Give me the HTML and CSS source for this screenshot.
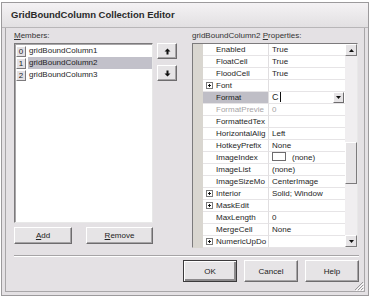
FILE: index.html
```html
<!DOCTYPE html>
<html lang="en">
<head>
    <meta charset="UTF-8">
    <meta name="viewport" content="width=device-width, initial-scale=1.0">
    <title>GridBoundColumn Collection Editor</title>
    <link rel="stylesheet" href="styles.css">
</head>
<body>
    <div class="window">
        <div class="titlebar">GridBoundColumn Collection Editor</div>

        <div class="frame">
            <div class="main">
                <div class="members">
                    <div class="caption"><u>M</u>embers:</div>
                    <div class="listbox">
                        <div class="item"><span class="idx">0</span><span class="name">gridBoundColumn1</span></div>
                        <div class="item selected"><span class="idx">1</span><span class="name">gridBoundColumn2</span></div>
                        <div class="item"><span class="idx">2</span><span class="name">gridBoundColumn3</span></div>
                    </div>
                    <div class="member-buttons">
                        <button class="btn add"><u>A</u>dd</button>
                        <button class="btn remove"><u>R</u>emove</button>
                    </div>
                </div>

                <div class="arrows">
                    <button class="btn arrow up">
                        <svg width="7" height="7" viewBox="0 0 7 7"><path d="M3.5 0.5 L6.5 3.5 H4.5 V6.5 H2.5 V3.5 H0.5 Z" fill="#111"/></svg>
                    </button>
                    <button class="btn arrow down">
                        <svg width="7" height="7" viewBox="0 0 7 7"><path d="M3.5 6.5 L6.5 3.5 H4.5 V0.5 H2.5 V3.5 H0.5 Z" fill="#111"/></svg>
                    </button>
                </div>

                <div class="props">
                    <div class="caption">gridBoundColumn2 <u>P</u>roperties:</div>
                    <div class="pgrid">
                        <div class="prows">
                            <div class="prow"><span class="gutter"></span><span class="pname">Enabled</span><span class="pval">True</span></div>
                            <div class="prow"><span class="gutter"></span><span class="pname">FloatCell</span><span class="pval">True</span></div>
                            <div class="prow"><span class="gutter"></span><span class="pname">FloodCell</span><span class="pval">True</span></div>
                            <div class="prow"><span class="gutter"></span><span class="pname expand"><svg class="plus" width="7" height="7" viewBox="0 0 7 7"><rect x="0.5" y="0.5" width="6" height="6" fill="#fff" stroke="#7a7a7a"/><path d="M2 3.5 H5 M3.5 2 V5" stroke="#111"/></svg>Font</span><span class="pval"></span></div>
                            <div class="prow active"><span class="gutter"></span><span class="pname">Format</span><span class="pval edit"><span class="caret">C</span><span class="drop"><svg width="5" height="3" viewBox="0 0 5 3"><path d="M0 0 H5 L2.5 3 Z" fill="#111"/></svg></span></span></div>
                            <div class="prow"><span class="gutter"></span><span class="pname muted">FormatPrevie</span><span class="pval muted">0</span></div>
                            <div class="prow"><span class="gutter"></span><span class="pname">FormattedTex</span><span class="pval"></span></div>
                            <div class="prow"><span class="gutter"></span><span class="pname">HorizontalAlig</span><span class="pval">Left</span></div>
                            <div class="prow"><span class="gutter"></span><span class="pname">HotkeyPrefix</span><span class="pval">None</span></div>
                            <div class="prow"><span class="gutter"></span><span class="pname">ImageIndex</span><span class="pval"><span class="swatch"></span>(none)</span></div>
                            <div class="prow"><span class="gutter"></span><span class="pname">ImageList</span><span class="pval">(none)</span></div>
                            <div class="prow"><span class="gutter"></span><span class="pname">ImageSizeMo</span><span class="pval">CenterImage</span></div>
                            <div class="prow"><span class="gutter"></span><span class="pname expand"><svg class="plus" width="7" height="7" viewBox="0 0 7 7"><rect x="0.5" y="0.5" width="6" height="6" fill="#fff" stroke="#7a7a7a"/><path d="M2 3.5 H5 M3.5 2 V5" stroke="#111"/></svg>Interior</span><span class="pval">Solid; Window</span></div>
                            <div class="prow"><span class="gutter"></span><span class="pname expand"><svg class="plus" width="7" height="7" viewBox="0 0 7 7"><rect x="0.5" y="0.5" width="6" height="6" fill="#fff" stroke="#7a7a7a"/><path d="M2 3.5 H5 M3.5 2 V5" stroke="#111"/></svg>MaskEdit</span><span class="pval"></span></div>
                            <div class="prow"><span class="gutter"></span><span class="pname">MaxLength</span><span class="pval">0</span></div>
                            <div class="prow"><span class="gutter"></span><span class="pname">MergeCell</span><span class="pval">None</span></div>
                            <div class="prow"><span class="gutter"></span><span class="pname expand"><svg class="plus" width="7" height="7" viewBox="0 0 7 7"><rect x="0.5" y="0.5" width="6" height="6" fill="#fff" stroke="#7a7a7a"/><path d="M2 3.5 H5 M3.5 2 V5" stroke="#111"/></svg>NumericUpDo</span><span class="pval"></span></div>
                        </div>
                        <div class="vscroll">
                            <div class="sbtn"><svg width="5" height="3" viewBox="0 0 5 3"><path d="M0 3 H5 L2.5 0 Z" fill="#111"/></svg></div>
                            <div class="track top"></div>
                            <div class="thumb"></div>
                            <div class="track"></div>
                            <div class="sbtn"><svg width="5" height="3" viewBox="0 0 5 3"><path d="M0 0 H5 L2.5 3 Z" fill="#111"/></svg></div>
                        </div>
                    </div>
                </div>
            </div>

            <div class="separator"></div>

            <div class="footer">
                <button class="btn default">OK</button>
                <button class="btn">Cancel</button>
                <button class="btn">Help</button>
            </div>

            <div class="grip">
                <svg width="11" height="11" viewBox="0 0 11 11"><path d="M10 2 L2 10 M10 5 L5 10 M10 8 L8 10" stroke="#9a989a" stroke-width="1"/><path d="M11 3 L3 11 M11 6 L6 11 M11 9 L9 11" stroke="#fff" stroke-width="1"/></svg>
            </div>
        </div>
    </div>
</body>
</html>
```

FILE: styles.css
```css
* {
    box-sizing: border-box;
}

body {
    margin: 0;
    background-color: #ffffff;
    font-family: "Liberation Sans", Arial, sans-serif;
    font-size: 8px;
    color: #1e1e1e;
}

u {
    text-decoration: underline;
}

.window {
    width: 368px;
    height: 294px;
    margin: 2px 0 0 1px;
    border: 1px solid #9c9a9c;
    background-color: #e4e1e4;
    display: flex;
    flex-direction: column;
}

.titlebar {
    height: 25px;
    padding-left: 9px;
    line-height: 24px;
    font-size: 9.5px;
    font-weight: bold;
    color: #2a2a2a;
    background: linear-gradient(#f4f2f4, #e2e0e2);
    border-bottom: 1px solid #b8b6b8;
}

.frame {
    position: relative;
    flex: 1;
    margin: 0 3px 3px 3px;
    border: 1px solid #a8a6a8;
    border-top: none;
    background-color: #e4e1e4;
}

.main {
    display: flex;
    padding: 1px 0 0 8px;
}

.caption {
    height: 14px;
    line-height: 14px;
    color: #333;
}

/* members list */
.members {
    width: 139px;
}

.listbox {
    height: 180px;
    background-color: #ffffff;
    border: 1px solid;
    border-color: #7c7a7c #e8e8e8 #e8e8e8 #7c7a7c;
    box-shadow: inset 1px 1px 0 #a8a6a8;
    padding: 1px 0 0 1px;
}

.item {
    display: flex;
    align-items: center;
    height: 12px;
}

.idx {
    width: 10px;
    height: 11px;
    line-height: 10px;
    text-align: center;
    border: 1px solid;
    border-color: #ffffff #7c7a7c #7c7a7c #ffffff;
    background-color: #e4e1e4;
    margin-right: 2px;
}

.name {
    flex: 1;
    height: 12px;
    line-height: 12px;
    padding-left: 1px;
}

.item.selected .name {
    background-color: #c2c1ca;
}

.member-buttons {
    display: flex;
    justify-content: space-between;
    margin-top: 4px;
}

.btn {
    font: inherit;
    color: #222;
    background-color: #e6e4e6;
    border: 1px solid;
    border-color: #ffffff #6e6c6e #6e6c6e #ffffff;
    box-shadow: inset -1px -1px 0 #a6a4a6;
    padding: 0;
    height: 17px;
}

.btn.add {
    width: 58px;
}

.btn.remove {
    width: 67px;
}

/* up / down */
.arrows {
    display: flex;
    flex-direction: column;
    gap: 6px;
    margin: 14px 0 0 4px;
}

.btn.arrow {
    width: 20px;
    height: 16px;
    display: flex;
    align-items: center;
    justify-content: center;
}

/* property grid */
.props {
    width: 166px;
    margin-left: 15px;
}

.pgrid {
    height: 205px;
    display: flex;
    border: 1px solid;
    border-color: #7c7a7c #e8e8e8 #e8e8e8 #7c7a7c;
    background-color: #ffffff;
}

.prows {
    flex: 1;
    display: flex;
    flex-direction: column;
}

.prow {
    display: grid;
    grid-template-columns: 10px 66px 1fr;
    height: 12px;
    line-height: 11px;
}

.gutter {
    background-color: #d9d6d0;
}

.pname,
.pval {
    border-bottom: 1px solid #e6e4e6;
    white-space: nowrap;
    overflow: hidden;
}

.pname {
    padding-left: 13px;
    border-right: 1px solid #e0dee0;
}

.pname.expand {
    padding-left: 3px;
}

.plus {
    vertical-align: -1px;
    margin-right: 3px;
}

.pval {
    padding-left: 3px;
}

.muted {
    color: #a6a4a6;
}

.prow.active .pname {
    background-color: #bfbec6;
}

.pval.edit {
    display: flex;
    justify-content: space-between;
    padding-right: 1px;
}

.caret {
    font-size: 9px;
    border-right: 1px solid #111;
    padding-right: 1px;
    height: 10px;
    line-height: 10px;
}

.drop {
    width: 11px;
    height: 11px;
    display: flex;
    align-items: center;
    justify-content: center;
    background-color: #e6e4e6;
    border: 1px solid;
    border-color: #ffffff #6e6c6e #6e6c6e #ffffff;
}

.swatch {
    display: inline-block;
    width: 14px;
    height: 9px;
    border: 1px solid #6e6c6e;
    background-color: #ffffff;
    vertical-align: -1px;
    margin-right: 6px;
}

.vscroll {
    width: 12px;
    display: flex;
    flex-direction: column;
    background-color: #f0eef0;
}

.sbtn {
    flex: none;
    height: 12px;
    display: flex;
    align-items: center;
    justify-content: center;
    background-color: #e6e4e6;
    border: 1px solid;
    border-color: #ffffff #7c7a7c #7c7a7c #ffffff;
}

.track {
    flex: 1;
}

.track.top {
    flex: none;
    height: 86px;
}

.thumb {
    flex: none;
    height: 42px;
    background-color: #e6e4e6;
    border: 1px solid;
    border-color: #ffffff #7c7a7c #7c7a7c #ffffff;
}

/* bottom */
.separator {
    margin: 7px 5px 0 8px;
    border-top: 1px solid #a6a4a6;
    border-bottom: 1px solid #ffffff;
}

.footer {
    display: flex;
    justify-content: flex-end;
    gap: 7px;
    margin-top: 3px;
    padding-right: 5px;
}

.footer .btn {
    width: 54px;
    height: 22px;
}

.btn.default {
    border: 1px solid #3c3a3c;
    box-shadow: inset 1px 1px 0 #ffffff, inset -2px -2px 0 #8c8a8c;
}

.grip {
    position: absolute;
    right: 0;
    bottom: 0;
    width: 11px;
    height: 11px;
}
```
